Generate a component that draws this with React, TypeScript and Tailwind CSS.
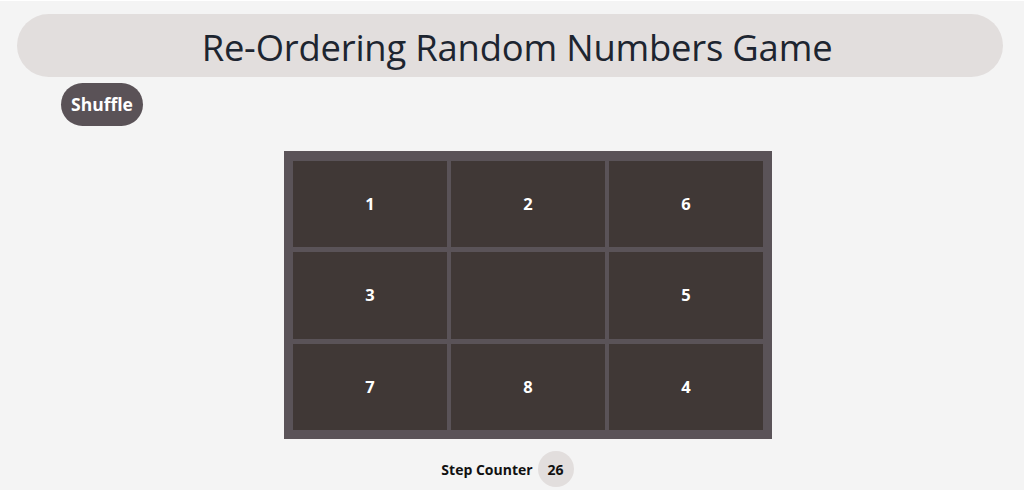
import { useState } from "react"

const START = [1, 2, 6, 3, 0, 5, 7, 8, 4]

export default function App() {
  const [tiles] = useState<number[]>(START)
  const [steps] = useState(26)

  return (
    <div className="min-h-[490px] bg-[#f4f4f4] border-t border-white pt-[13px] font-['Open_Sans',sans-serif]">
      <header className="ml-[17px] mr-[21px] h-[63px] rounded-full bg-[#e2dedd] flex items-center justify-center pl-[14px]">
        <h1 className="text-[36.4px] leading-none pt-[3px] font-medium text-[#1d2530] tracking-[-0.2px]">Re-Ordering Random Numbers Game</h1>
      </header>

      <div className="pl-[61px] pt-[6px]">
        <button className="h-[43px] w-[82px] rounded-full bg-[#5a5257] text-white font-bold text-[17.5px]">
          Shuffle
        </button>
      </div>

      <div className="flex justify-center pt-[25px] pl-[32px]">
        <div className="bg-[#5a5358] pt-[10px] pb-[9px] px-[9px] grid grid-cols-[154px_154px_154px] grid-rows-[86px_87px_86px] gap-[5px] gap-x-[4px]">
          {tiles.map((n, i) => (
            <div
              key={i}
              className="bg-[#403836] flex items-center justify-center text-white font-bold text-[16.5px]"
            >
              {n === 0 ? "" : n}
            </div>
          ))}
        </div>
      </div>

      <div className="flex items-center justify-center gap-[5px] pt-[12px] pr-[9px]">
        <span className="font-bold text-[14px] text-[#111]">Step Counter</span>
        <span className="w-[36px] h-[36px] rounded-full bg-[#e2dedd] flex items-center justify-center font-bold text-[14px] text-[#111]">
          {steps}
        </span>
      </div>
    </div>
  )
}
